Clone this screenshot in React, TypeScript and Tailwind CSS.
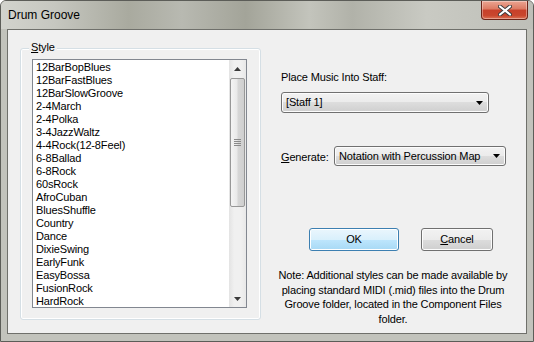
const styles = [
  "12BarBopBlues",
  "12BarFastBlues",
  "12BarSlowGroove",
  "2-4March",
  "2-4Polka",
  "3-4JazzWaltz",
  "4-4Rock(12-8Feel)",
  "6-8Ballad",
  "6-8Rock",
  "60sRock",
  "AfroCuban",
  "BluesShuffle",
  "Country",
  "Dance",
  "DixieSwing",
  "EarlyFunk",
  "EasyBossa",
  "FusionRock",
  "HardRock",
];

const DownArrow = () => (
  <svg width="7" height="4" viewBox="0 0 7 4">
    <polygon points="0,0 7,0 3.5,4" fill="#000" />
  </svg>
);

const ScrollArrow = ({ up }: { up?: boolean }) => (
  <svg width="7" height="4" viewBox="0 0 7 4">
    <polygon
      points={up ? "0,4 7,4 3.5,0" : "0,0 7,0 3.5,4"}
      fill="#3a3a3a"
    />
  </svg>
);

const Combo = ({ text, className }: { text: string; className: string }) => (
  <div
    className={`flex items-center justify-between border border-[#707070] rounded-[3px] pl-[4px] pr-[5px] bg-[linear-gradient(#f2f2f2_0%,#ebebeb_50%,#dddddd_50%,#cfcfcf_100%)] shadow-[inset_0_0_0_1px_#fcfcfc] ${className}`}
  >
    <span className="leading-[13px] whitespace-nowrap">{text}</span>
    <DownArrow />
  </div>
);

export default function App() {
  return (
    <div className="w-[534px] h-[342px] flex flex-col overflow-hidden border border-[#5c5d58] rounded-t-[6px] bg-[#c2c3bc] font-['Liberation_Sans',Arial,sans-serif] text-[11px] tracking-[-0.15px] text-black">
      {/* title bar */}
      <div className="h-[28px] flex items-start justify-between bg-[linear-gradient(90deg,#d2d3cd_0%,#c6c7c0_10%,#a9aa9f_24%,#b8b9b1_34%,#a3a499_46%,#c3c4bc_58%,#b1b2a9_66%,#c9cac3_80%,#bebfb8_100%)]">
        <div className="pl-[7px] pt-[6px] text-[12px] leading-[16px] tracking-normal text-black">
          Drum Groove
        </div>
        <div className="mr-[5px] w-[47px] h-[19px] flex items-center justify-center rounded-b-[4px] border border-t-0 border-[#6b2418] bg-[linear-gradient(#eba592_0%,#dc7a62_45%,#c7402a_50%,#c9462d_80%,#dc7255_100%)] shadow-[inset_0_0_0_1px_rgba(255,255,255,0.35)]">
          <svg width="14" height="11" viewBox="0 0 14 11">
            <path
              d="M2 1.5 L12 9.5 M12 1.5 L2 9.5"
              stroke="#3d3d3d"
              strokeWidth="4"
              strokeLinecap="round"
            />
            <path
              d="M2 1.5 L12 9.5 M12 1.5 L2 9.5"
              stroke="#ffffff"
              strokeWidth="2.2"
              strokeLinecap="round"
            />
          </svg>
        </div>
      </div>

      <div className="flex h-[305px]">
        <div className="w-[6px]" />
        {/* client area */}
        <div className="w-[520px] h-[305px] border border-[#6f706b] bg-[#f0f0f0] flex">
          {/* Style group box */}
          <div className="relative ml-[12px] mt-[18px] w-[241px] h-[272px] border border-[#d5dfe5] rounded-[3px] shadow-[inset_0_0_0_1px_#ffffff]">
            <span className="absolute left-[8px] -top-[8px] px-[2px] bg-[#f0f0f0] leading-[13px]">
              <u>S</u>tyle
            </span>
            <div className="mt-[10px] ml-[11px] w-[215px] h-[249px] border border-[#828790] bg-white flex">
              <div className="flex-1 pt-[1px] pl-[3px]">
                {styles.map((s) => (
                  <div key={s} className="h-[13px] leading-[13px] whitespace-nowrap">
                    {s}
                  </div>
                ))}
              </div>
              {/* scrollbar */}
              <div className="w-[17px] flex flex-col bg-[linear-gradient(90deg,#e3e3e3,#f0f0f0_30%,#f0f0f0_70%,#e8e8e8)]">
                <div className="h-[17px] flex items-center justify-center">
                  <ScrollArrow up />
                </div>
                <div className="mt-[1px] h-[129px] mx-[1px] rounded-[2px] border border-[#979797] bg-[linear-gradient(90deg,#f4f4f4,#e9e9e9_45%,#d6d6d6_55%,#cfcfcf)] flex flex-col items-center justify-center gap-[1px]">
                  <div className="w-[7px] h-[1px] bg-[#8a8a8a]" />
                  <div className="w-[7px] h-[1px] bg-[#8a8a8a]" />
                  <div className="w-[7px] h-[1px] bg-[#8a8a8a]" />
                  <div className="w-[7px] h-[1px] bg-[#8a8a8a]" />
                </div>
                <div className="flex-1" />
                <div className="h-[17px] flex items-center justify-center">
                  <ScrollArrow />
                </div>
              </div>
            </div>
          </div>

          {/* right side */}
          <div className="ml-[20px] flex flex-col">
            <div className="mt-[41px] h-[13px] leading-[13px]">Place Music Into Staff:</div>
            <Combo text="[Staff 1]" className="mt-[8px] w-[208px] h-[21px]" />
            <div className="mt-[33px] flex items-center">
              <div className="w-[53px] leading-[13px] pt-[2px]">
                <u>G</u>enerate:
              </div>
              <Combo text="Notation with Percussion Map" className="w-[172px] h-[20px]" />
            </div>
            <div className="mt-[62px] flex">
              <div className="ml-[28px] w-[90px] h-[23px] flex items-center justify-center rounded-[3px] border border-[#3c7fb1] bg-[linear-gradient(#eaf6fd_0%,#d9f0fc_50%,#bee6fd_50%,#a7d9f5_100%)] shadow-[inset_0_0_0_1px_#ffffff]">
                OK
              </div>
              <div className="ml-[22px] w-[72px] h-[23px] flex items-center justify-center rounded-[3px] border border-[#707070] bg-[linear-gradient(#f2f2f2_0%,#ebebeb_50%,#dddddd_50%,#cfcfcf_100%)] shadow-[inset_0_0_0_1px_#fcfcfc]">
                <span>
                  <u>C</u>ancel
                </span>
              </div>
            </div>
            <div className="mt-[17px] w-[224px] flex flex-col items-center leading-[14.5px]">
              <div className="whitespace-nowrap">Note: Additional styles can be made available by</div>
              <div className="whitespace-nowrap">placing standard MIDI (.mid) files into the Drum</div>
              <div className="whitespace-nowrap">Groove folder, located in the Component Files</div>
              <div className="whitespace-nowrap">folder.</div>
            </div>
          </div>
        </div>
        <div className="w-[6px]" />
      </div>
    </div>
  );
}
